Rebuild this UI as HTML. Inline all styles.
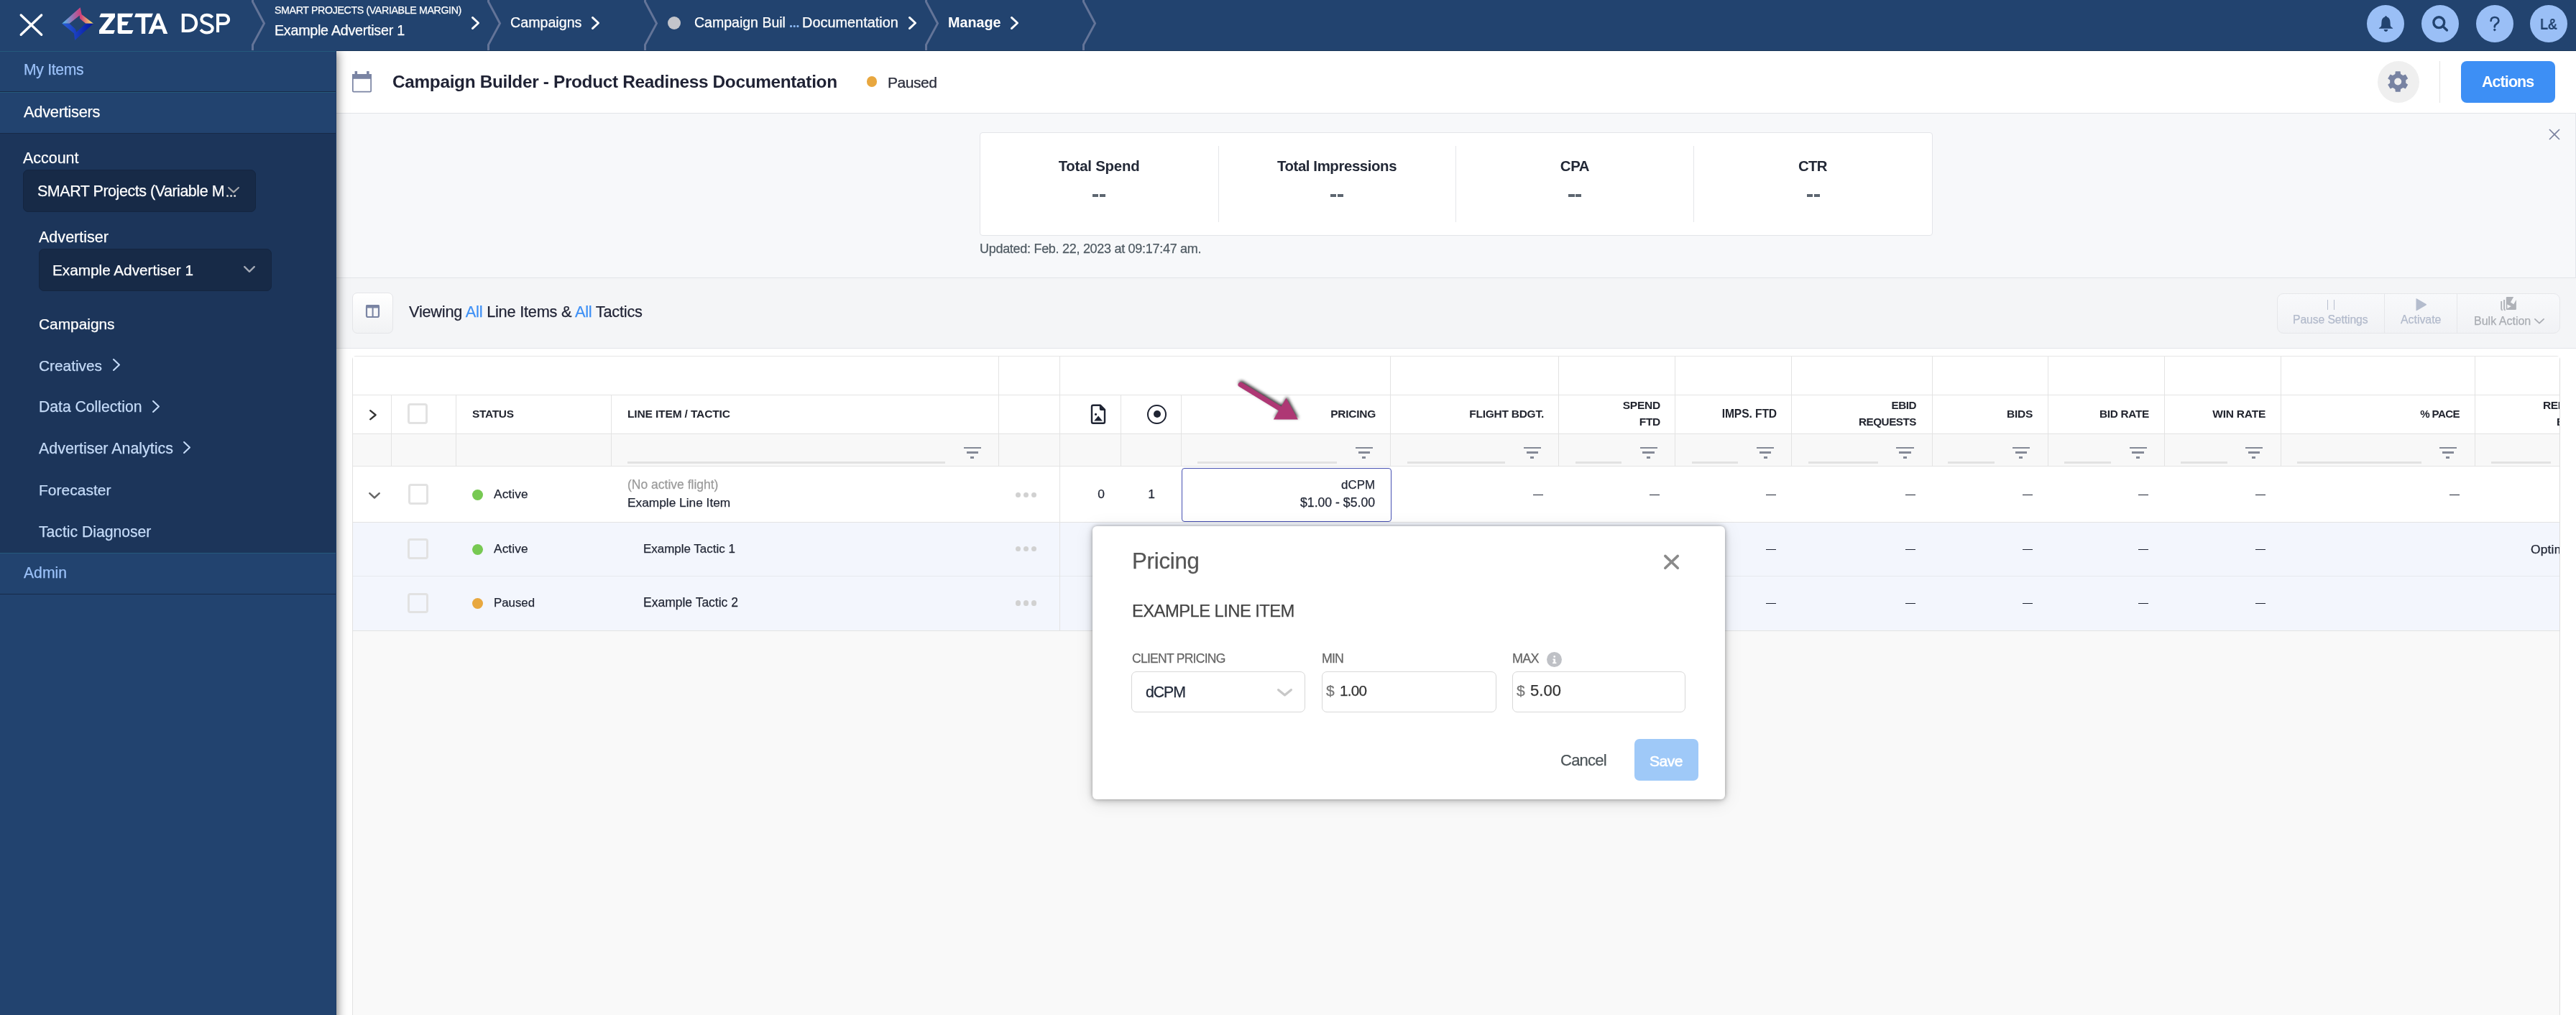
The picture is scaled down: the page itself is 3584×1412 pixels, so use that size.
<!DOCTYPE html>
<html><head><meta charset="utf-8">
<style>
*{box-sizing:border-box;margin:0;padding:0}
html,body{width:3584px;height:1412px;overflow:hidden;background:#fff;font-family:"Liberation Sans",sans-serif;position:relative}
.a{position:absolute}
.t{position:absolute;white-space:nowrap;line-height:1;will-change:transform}
.r{-webkit-text-stroke:0.25px currentColor}
</style></head><body>
<div class="a" style="left:0;top:0;width:3584px;height:71px;background:#22436f"></div>
<div class="a" style="left:468px;top:70px;width:3116px;height:1px;background:#1b3659"></div>
<svg class="a" style="left:0;top:0" width="70" height="70"><g stroke="#fff" stroke-width="3.3" stroke-linecap="round"><line x1="29.2" y1="21" x2="57.7" y2="48.3"/><line x1="57.7" y1="21" x2="29.2" y2="48.3"/></g></svg>
<svg class="a" style="left:80px;top:5px" width="56" height="56" viewBox="80 5 56 56">
<defs>
<linearGradient id="lgT" x1="86" y1="0" x2="130" y2="0" gradientUnits="userSpaceOnUse"><stop offset="0" stop-color="#4fc0f5"/><stop offset="0.35" stop-color="#9a6fb0"/><stop offset="0.6" stop-color="#d0407a"/><stop offset="1" stop-color="#fbf36a"/></linearGradient>
<linearGradient id="lgB" x1="86" y1="0" x2="130" y2="0" gradientUnits="userSpaceOnUse"><stop offset="0" stop-color="#2a5fd8"/><stop offset="1" stop-color="#0514a0"/></linearGradient>
</defs>
<path d="M86.2 32.8 L111.7 10.3 L113.6 20 L130 32.8 Z M96.6 32.8 L110.7 21.4 L111.2 26 L119.3 32.8 Z" fill="url(#lgT)" fill-rule="evenodd"/>
<path d="M86.2 32.8 L130 32.8 L104.1 55.9 L103 46.5 Z M96.6 32.8 L119.3 32.8 L106.2 44.8 L105 40.5 Z" fill="url(#lgB)" fill-rule="evenodd"/>
</svg>
<svg class="a" style="left:130px;top:10px" width="200" height="45" viewBox="130 10 200 45"><g fill="#fff" fill-rule="evenodd">
<path d="M140.5 18.8 H160 V23.7 L146.1 41.9 H159.8 L158 46.9 H138 V41.9 L151.8 24.1 H138.2 Z"/>
<path d="M163.7 18.8 H185.3 L183.1 23.9 H169.7 V29.9 H178.8 L176.6 35.2 H169.7 V41.9 H185.5 L183.3 46.9 H166.3 Q163.7 46.9 163.7 44.3 Z"/>
<path d="M188.9 18.8 H212.9 L210.9 23.9 H202.2 V46.9 H196.8 V23.9 H187.1 Z"/>
<path d="M218.2 18.8 H222 L233.3 46.9 H227.5 L225.2 40.6 H215.3 L212.1 46.9 H206.3 Z M220 26.5 L223.8 35.8 H216.4 Z"/>
</g>
<path d="M252.7 18.9 H261 C270 18.9 275.2 24.6 275.2 32 C275.2 39.4 270 45.1 261 45.1 H252.7 Z M256.9 23 H260.8 C267 23 270.9 26.8 270.9 32 C270.9 37.2 267 41 260.8 41 H256.9 Z" fill="#fff" fill-rule="evenodd"/>
<path d="M295.6 24.4 C293.6 22 290.8 20.9 287.8 20.9 C283.6 20.9 280.3 23.2 280.3 26.8 C280.3 30.6 284 31.7 288 33.1 C292.3 34.6 295.7 36 295.7 39.6 C295.7 43 292.6 45.5 288 45.5 C284.3 45.5 281.3 43.8 279.2 41.2" fill="none" stroke="#fff" stroke-width="4.1"/>
<path d="M301 18.9 H311.2 C316.6 18.9 320.1 22.4 320.1 27 C320.1 31.6 316.6 35 311.2 35 H305.1 V45.1 H301 Z M305.1 23 H311 C314.2 23 316 24.8 316 27 C316 29.2 314.2 31 311 31 H305.1 Z" fill="#fff" fill-rule="evenodd"/>
</svg>
<svg class="a" style="left:0;top:0" width="1600" height="70"><g fill="none" stroke="#637498" stroke-width="3" stroke-linejoin="miter"><polyline points="351.5,-2 351.5,2.5 367.5,32.6 351.5,62.4 351.5,72" /><polyline points="679.5,-2 679.5,2.5 695.5,32.6 679.5,62.4 679.5,72" /><polyline points="897.5,-2 897.5,2.5 913.5,32.6 897.5,62.4 897.5,72" /><polyline points="1288.5,-2 1288.5,2.5 1304.5,32.6 1288.5,62.4 1288.5,72" /><polyline points="1507.5,-2 1507.5,2.5 1523.5,32.6 1507.5,62.4 1507.5,72" /></g></svg>
<svg class="a" style="left:650.7px;top:18px" width="21" height="28"><polyline points="6.4,6.4 14.6,14.0 6.4,21.6" fill="none" stroke="#fff" stroke-width="2.8" stroke-linecap="round" stroke-linejoin="round"/></svg>
<svg class="a" style="left:817.5px;top:18px" width="21" height="28"><polyline points="6.4,6.4 14.6,14.0 6.4,21.6" fill="none" stroke="#fff" stroke-width="2.8" stroke-linecap="round" stroke-linejoin="round"/></svg>
<svg class="a" style="left:1258.8px;top:18px" width="21" height="28"><polyline points="6.4,6.4 14.6,14.0 6.4,21.6" fill="none" stroke="#fff" stroke-width="2.8" stroke-linecap="round" stroke-linejoin="round"/></svg>
<svg class="a" style="left:1401px;top:18px" width="21" height="28"><polyline points="6.4,6.4 14.6,14.0 6.4,21.6" fill="none" stroke="#fff" stroke-width="2.8" stroke-linecap="round" stroke-linejoin="round"/></svg>
<div class="t r" style="top:7.00px;font-size:14.22px;color:#fff;letter-spacing:-0.37px;left:381.80px;">SMART PROJECTS (VARIABLE MARGIN)</div>
<div class="t r" style="top:33.00px;font-size:19.69px;color:#fff;letter-spacing:-0.26px;left:382.40px;">Example Advertiser 1</div>
<div class="t r" style="top:22.00px;font-size:19.67px;color:#fff;left:709.70px;">Campaigns</div>
<div class="a" style="left:929px;top:23px;width:18px;height:18px;border-radius:50%;background:#c3c5cb"></div>
<div class="t r" style="top:22.00px;font-size:19.53px;color:#fff;left:965.60px;">Campaign Buil</div>
<div class="a" style="left:1099.2px;top:35.3px;width:2.7px;height:2.7px;border-radius:50%;background:#8dbaf5;box-shadow:4.7px 0 0 #8dbaf5,9.4px 0 0 #8dbaf5"></div>
<div class="t r" style="top:22.00px;font-size:19.92px;color:#fff;left:1116.00px;">Documentation</div>
<div class="t" style="top:22.00px;font-size:19.74px;color:#fff;font-weight:700;left:1319.00px;">Manage</div>
<div class="a" style="left:3292.8px;top:7px;width:52px;height:52px;border-radius:50%;background:#9abff6"></div>
<div class="a" style="left:3369px;top:7px;width:52px;height:52px;border-radius:50%;background:#9abff6"></div>
<div class="a" style="left:3445px;top:7px;width:52px;height:52px;border-radius:50%;background:#9abff6"></div>
<div class="a" style="left:3520px;top:7px;width:52px;height:52px;border-radius:50%;background:#9abff6"></div>
<svg class="a" style="left:3300px;top:15px" width="40" height="36" viewBox="3300 15 40 36"><g fill="#22436f">
<path d="M3319.5 22.2 c.9 0 1.4 .6 1.4 1.4 c3.2 1 4.5 3.6 4.6 7.2 l.3 4.6 c.2 1.4 1.6 2.7 3.3 3.5 v.9 h-19.2 v-.9 c1.7 -.8 3.1 -2.1 3.3 -3.5 l.3 -4.6 c.1 -3.6 1.4 -6.2 4.6 -7.2 c0 -.8 .5 -1.4 1.4 -1.4z"/>
<path d="M3316.6 41 h5.8 c-.4 1.8 -1.5 3 -2.9 3 s-2.5 -1.2 -2.9 -3z"/></g></svg>
<svg class="a" style="left:3375px;top:15px" width="40" height="36" viewBox="3375 15 40 36"><g fill="none" stroke="#22436f" stroke-width="3.4" stroke-linecap="round">
<circle cx="3393.3" cy="31.2" r="7.4"/><line x1="3398.6" y1="36.6" x2="3404.4" y2="42"/></g></svg>
<svg class="a" style="left:3455px;top:15px" width="32" height="36" viewBox="3455 15 32 36"><path d="M3465.6 29 C3465.6 25.8 3468 24 3470.9 24 C3474 24 3476.4 26 3476.4 28.9 C3476.4 32.2 3472.6 33.2 3471.3 35.2 C3470.9 35.9 3470.8 36.6 3470.8 37.4" fill="none" stroke="#22436f" stroke-width="2.7" stroke-linecap="round"/><path d="M3470.8 39.4 l2.1 2.1 l-2.1 2.1 l-2.1 -2.1z" fill="#22436f"/></svg>
<div class="t" style="left:3533.6px;top:24.10px;font-size:21.5px;font-weight:700;color:#22436f;letter-spacing:-0.6px;transform:scaleX(0.86);transform-origin:0 0">L&amp;</div>
<div class="a" style="left:0;top:71px;width:468px;height:1341px;background:#22436f"></div>
<div class="a" style="left:0;top:71px;width:467px;height:1px;background:#255a7c"></div>
<div class="a" style="left:0;top:127px;width:468px;height:1px;background:#172a48"></div><div class="a" style="left:0;top:128px;width:468px;height:1px;background:#255a7c"></div>
<div class="a" style="left:0;top:185px;width:468px;height:584px;background:#1c355a;border-top:1px solid #172a48"></div>
<div class="a" style="left:0;top:769px;width:468px;height:1px;background:#255a7c"></div>
<div class="a" style="left:0;top:826px;width:468px;height:1px;background:#172a48"></div>
<div class="t r" style="top:86.00px;font-size:21.15px;color:#9bc1f8;letter-spacing:-0.30px;left:32.60px;">My Items</div>
<div class="t r" style="top:145.00px;font-size:21.84px;color:#fff;letter-spacing:-0.27px;left:32.60px;">Advertisers</div>
<div class="t r" style="top:210.00px;font-size:21.45px;color:#fff;left:32.40px;">Account</div>
<div class="a" style="left:32px;top:236px;width:324px;height:59px;border-radius:7px;background:#172a47;border:1px solid #142540"></div>
<div class="t r" style="top:256.00px;font-size:21.48px;color:#fff;letter-spacing:-0.46px;left:51.50px;">SMART Projects (Variable M</div>
<svg class="a" style="left:312px;top:254.89999999999998px" width="26" height="18.4"><polyline points="6.05,6.05 13.0,12.35 19.95,6.05" fill="none" stroke="#a6a8ad" stroke-width="2.1" stroke-linecap="round" stroke-linejoin="round"/></svg>
<div class="a" style="left:314.7px;top:270.5px;width:3px;height:3px;border-radius:50%;background:#d6d6d6;box-shadow:5.1px 0 0 #d6d6d6,10.2px 0 0 #d6d6d6"></div>
<div class="t r" style="top:319.00px;font-size:21.55px;color:#fff;left:54.00px;">Advertiser</div>
<div class="a" style="left:54px;top:346px;width:324px;height:59px;border-radius:7px;background:#172a47;border:1px solid #142540"></div>
<div class="t r" style="top:366.00px;font-size:20.74px;color:#fff;left:73.30px;">Example Advertiser 1</div>
<svg class="a" style="left:334px;top:365px" width="26" height="19"><polyline points="6.2,6.2 13.0,12.8 19.8,6.2" fill="none" stroke="#a3a9b5" stroke-width="2.4" stroke-linecap="round" stroke-linejoin="round"/></svg>
<div class="t r" style="top:441.00px;font-size:20.86px;color:#fff;left:54.40px;">Campaigns</div>
<div class="t r" style="top:499.00px;font-size:20.83px;color:#c5dbf8;left:54.40px;">Creatives</div>
<svg class="a" style="left:151.5px;top:494px" width="20" height="27"><polyline points="6.05,6.05 13.95,13.5 6.05,20.95" fill="none" stroke="#c5dbf8" stroke-width="2.1" stroke-linecap="round" stroke-linejoin="round"/></svg>
<div class="t r" style="top:555.00px;font-size:21.16px;color:#c5dbf8;left:54.40px;">Data Collection</div>
<svg class="a" style="left:206.6px;top:551.5px" width="20" height="27"><polyline points="6.05,6.05 13.95,13.5 6.05,20.95" fill="none" stroke="#c5dbf8" stroke-width="2.1" stroke-linecap="round" stroke-linejoin="round"/></svg>
<div class="t r" style="top:614.00px;font-size:21.43px;color:#c5dbf8;left:54.40px;">Advertiser Analytics</div>
<svg class="a" style="left:250px;top:609px" width="20" height="27"><polyline points="6.05,6.05 13.95,13.5 6.05,20.95" fill="none" stroke="#c5dbf8" stroke-width="2.1" stroke-linecap="round" stroke-linejoin="round"/></svg>
<div class="t r" style="top:671.00px;font-size:21.03px;color:#c5dbf8;left:54.40px;">Forecaster</div>
<div class="t r" style="top:729.00px;font-size:21.17px;color:#c5dbf8;left:54.40px;">Tactic Diagnoser</div>
<div class="t r" style="top:786.00px;font-size:21.17px;color:#9bc1f8;left:32.60px;">Admin</div>
<div class="a" style="left:468px;top:71px;width:3116px;height:1341px;background:#fff"></div>
<div class="a" style="left:468px;top:157px;width:3116px;height:230px;background:#f7f8fa;border-top:1px solid #e2e4e8;border-bottom:1px solid #e2e4e8;border-right:1px solid #e4e6ea"></div>
<div class="a" style="left:468px;top:387px;width:3116px;height:98px;background:#f4f5f7;border-bottom:1px solid #e3e5e9"></div>
<svg class="a" style="left:488px;top:97px" width="32" height="34" viewBox="488 97 32 34">
<rect x="490.85" y="104" width="25.3" height="23.6" rx="1.2" fill="none" stroke="#7a84a3" stroke-width="1.7"/>
<rect x="490" y="103" width="27" height="6.8" fill="#7a84a3"/>
<rect x="493.6" y="99" width="3.5" height="5" fill="#7a84a3"/><rect x="510.1" y="99" width="3.5" height="5" fill="#7a84a3"/></svg>
<div class="t" style="top:102.00px;font-size:24.38px;color:#1f2234;font-weight:700;letter-spacing:-0.33px;left:546.20px;">Campaign Builder - Product Readiness Documentation</div>
<div class="a" style="left:1206px;top:106.4px;width:14.2px;height:14.2px;border-radius:50%;background:#e8a73f"></div>
<div class="t r" style="top:104.00px;font-size:21.07px;color:#2a2d3b;letter-spacing:-0.49px;left:1234.90px;">Paused</div>
<div class="a" style="left:3308px;top:85px;width:58px;height:58px;border-radius:50%;background:#efefef"></div>
<svg class="a" style="left:3316px;top:93px" width="42" height="42" viewBox="3316 93 42 42"><path d="M3332.37,102.98 L3332.79,99.30 L3339.61,99.30 L3340.03,102.98 L3343.40,104.92 L3346.79,103.45 L3350.20,109.35 L3347.23,111.56 L3347.23,115.44 L3350.20,117.65 L3346.79,123.55 L3343.40,122.08 L3340.03,124.02 L3339.61,127.70 L3332.79,127.70 L3332.37,124.02 L3329.00,122.08 L3325.61,123.55 L3322.20,117.65 L3325.17,115.44 L3325.17,111.56 L3322.20,109.35 L3325.61,103.45 L3329.00,104.92 Z M3341.2,113.5 A5 5 0 1 0 3331.2,113.5 A5 5 0 1 0 3341.2,113.5 Z" fill="#7883a2" fill-rule="evenodd"/></svg>
<div class="a" style="left:3394px;top:85px;width:1px;height:58px;background:#e3e3e3"></div>
<div class="a" style="left:3424px;top:85px;width:131px;height:58px;border-radius:8px;background:#3d8ff5"></div>
<div class="t" style="top:104.00px;font-size:21.39px;color:#fff;font-weight:700;letter-spacing:-0.87px;left:3452.80px;">Actions</div>
<div class="a" style="left:1363px;top:184px;width:1326px;height:144px;background:#fff;border:1px solid #e3e5e9;border-radius:4px"></div>
<div class="a" style="left:1694.5px;top:203px;width:1px;height:106px;background:#e5e6e9"></div>
<div class="a" style="left:2025px;top:203px;width:1px;height:106px;background:#e5e6e9"></div>
<div class="a" style="left:2356px;top:203px;width:1px;height:106px;background:#e5e6e9"></div>
<div class="t" style="top:221.00px;font-size:20.40px;color:#232937;font-weight:700;letter-spacing:-0.22px;left:528.79px;width:2000px;text-align:center;">Total Spend</div>
<div class="a" style="left:1519.9px;top:270.3px;width:8.4px;height:3.6px;background:#5d6670"></div><div class="a" style="left:1529.8000000000002px;top:270.3px;width:8.4px;height:3.6px;background:#5d6670"></div>
<div class="t" style="top:221.00px;font-size:20.40px;color:#232937;font-weight:700;letter-spacing:-0.40px;left:859.80px;width:2000px;text-align:center;">Total Impressions</div>
<div class="a" style="left:1851px;top:270.3px;width:8.4px;height:3.6px;background:#5d6670"></div><div class="a" style="left:1860.9px;top:270.3px;width:8.4px;height:3.6px;background:#5d6670"></div>
<div class="t" style="top:221.00px;font-size:20.40px;color:#232937;font-weight:700;letter-spacing:-0.38px;left:1191.01px;width:2000px;text-align:center;">CPA</div>
<div class="a" style="left:2182.2px;top:270.3px;width:8.4px;height:3.6px;background:#5d6670"></div><div class="a" style="left:2192.1px;top:270.3px;width:8.4px;height:3.6px;background:#5d6670"></div>
<div class="t" style="top:221.00px;font-size:20.40px;color:#232937;font-weight:700;letter-spacing:-0.71px;left:1522.34px;width:2000px;text-align:center;">CTR</div>
<div class="a" style="left:2513.7px;top:270.3px;width:8.4px;height:3.6px;background:#5d6670"></div><div class="a" style="left:2523.6px;top:270.3px;width:8.4px;height:3.6px;background:#5d6670"></div>
<div class="t r" style="top:337.00px;font-size:18.01px;color:#4f5a62;letter-spacing:-0.29px;left:1362.80px;">Updated: Feb. 22, 2023 at 09:17:47 am.</div>
<svg class="a" style="left:3543px;top:176px" width="22" height="22" viewBox="3543 176 22 22"><g stroke="#7a829e" stroke-width="1.7"><line x1="3547" y1="180" x2="3561" y2="194"/><line x1="3561" y1="180" x2="3547" y2="194"/></g></svg>
<div class="a" style="left:490px;top:407px;width:57px;height:57px;border-radius:7px;border:1px solid #e4e5e8;background:linear-gradient(#fff,#f1f2f4)"></div>
<svg class="a" style="left:505px;top:420px" width="28" height="26" viewBox="505 420 28 26"><rect x="510" y="425" width="17" height="16" rx="2" fill="none" stroke="#7a84a3" stroke-width="2.2"/>
<rect x="509" y="424" width="19" height="4.5" rx="1.5" fill="#7a84a3"/><rect x="517.6" y="427" width="2" height="14" fill="#7a84a3"/></svg>
<div class="t r" style="top:423.00px;font-size:21.74px;color:#1f2234;letter-spacing:-0.22px;left:569.00px;">Viewing <span style="color:#3d8ff5">All</span> Line Items &amp; <span style="color:#3d8ff5">All</span> Tactics</div>
<div class="a" style="left:3168px;top:407.5px;width:394px;height:56.5px;border-radius:9px;border:1px solid #e6e7ea;background:linear-gradient(#f8f9fb,#f1f2f5)"></div>
<div class="a" style="left:3317px;top:408px;width:1px;height:56px;background:#e6e7ea"></div>
<div class="a" style="left:3418px;top:408px;width:1px;height:56px;background:#e6e7ea"></div>
<div class="a" style="left:3237.8px;top:416.7px;width:1.6px;height:14.5px;background:#b8bfcf"></div><div class="a" style="left:3246.5px;top:416.7px;width:1.6px;height:14.5px;background:#b8bfcf"></div>
<div class="t r" style="top:437.00px;font-size:15.78px;color:#b2bacb;letter-spacing:-0.11px;left:3190.00px;">Pause Settings</div>
<svg class="a" style="left:3358px;top:412px" width="22" height="24" viewBox="3358 412 22 24"><path d="M3361.5 416.5 Q3361 414.6 3362.7 415.6 L3375.6 423 Q3376.6 423.8 3375.6 424.6 L3362.7 432 Q3361 433 3361.5 431.1 Z" fill="#b4bccd"/></svg>
<div class="t r" style="top:437.00px;font-size:15.92px;color:#b2bacb;letter-spacing:-0.03px;left:3340.00px;">Activate</div>
<svg class="a" style="left:3476px;top:410px" width="30" height="26" viewBox="3476 410 30 26"><g fill="none" stroke="#afb2b8" stroke-width="1.9">
<path d="M3480.2 419 v10.5 c0 1.2 .6 1.8 1.6 2.1"/><path d="M3484.1 417 v12.6 c0 1.2 .6 1.8 1.6 2.1"/></g>
<path d="M3486.8 414.2 a1.1 1.1 0 0 1 1.1 -1.1 h9.3 l-4.3 7.5 l4.4 2.6 l3.6 -6.3 v12.9 a1.2 1.2 0 0 1 -1.2 1.2 h-11.7 a1.2 1.2 0 0 1 -1.2 -1.2z" fill="#afb2b8"/>
<path d="M3488.2 423.6 l5.6 2.4 l-5.3 3.2z" fill="#f6f7f9"/></svg>
<div class="t r" style="top:439.00px;font-size:16.01px;color:#a9acb2;letter-spacing:0.01px;left:3441.70px;">Bulk Action</div>
<svg class="a" style="left:3521px;top:438.4px" width="24" height="17.5"><polyline points="5.9,5.9 12.0,11.6 18.1,5.9" fill="none" stroke="#a9acb2" stroke-width="1.8" stroke-linecap="round" stroke-linejoin="round"/></svg>
<div class="a" style="left:490px;top:495px;width:3072px;height:930px;background:#f9f9f9;border-left:1px solid #e2e2e2;border-top:1px solid #e6e6e6;border-right:1px solid #dedede;border-top-right-radius:5px;border-top-left-radius:5px"></div>
<div class="a" style="left:491px;top:496px;width:3070px;height:53px;background:#fff"></div>
<div class="a" style="left:491px;top:550px;width:3070px;height:53px;background:#fff"></div>
<div class="a" style="left:491px;top:604px;width:3070px;height:44px;background:#f8f8f8"></div>
<div class="a" style="left:491px;top:649px;width:3070px;height:77px;background:#fff"></div>
<div class="a" style="left:491px;top:727px;width:3070px;height:74px;background:#f3f6fd"></div>
<div class="a" style="left:491px;top:802px;width:3070px;height:75px;background:#f3f6fd"></div>
<div class="a" style="left:491px;top:549px;width:3070px;height:1px;background:#e3e3e3"></div>
<div class="a" style="left:491px;top:603px;width:3070px;height:1px;background:#e3e3e3"></div>
<div class="a" style="left:491px;top:648px;width:3070px;height:1px;background:#e3e3e3"></div>
<div class="a" style="left:491px;top:726px;width:3070px;height:1px;background:#e3e3e3"></div>
<div class="a" style="left:491px;top:801px;width:3070px;height:1px;background:#e6e9ee"></div>
<div class="a" style="left:491px;top:877px;width:3070px;height:1px;background:#e3e3e3"></div>
<div class="a" style="left:544px;top:550px;width:1px;height:98px;background:#e3e3e3"></div>
<div class="a" style="left:634px;top:550px;width:1px;height:98px;background:#e3e3e3"></div>
<div class="a" style="left:850px;top:550px;width:1px;height:98px;background:#e3e3e3"></div>
<div class="a" style="left:1389px;top:496px;width:1px;height:152px;background:#e3e3e3"></div>
<div class="a" style="left:1474px;top:496px;width:1px;height:152px;background:#e3e3e3"></div>
<div class="a" style="left:1559px;top:550px;width:1px;height:98px;background:#e3e3e3"></div>
<div class="a" style="left:1643px;top:550px;width:1px;height:98px;background:#e3e3e3"></div>
<div class="a" style="left:1934px;top:496px;width:1px;height:152px;background:#e3e3e3"></div>
<div class="a" style="left:2168px;top:496px;width:1px;height:152px;background:#e3e3e3"></div>
<div class="a" style="left:2330px;top:496px;width:1px;height:152px;background:#e3e3e3"></div>
<div class="a" style="left:2492px;top:496px;width:1px;height:152px;background:#e3e3e3"></div>
<div class="a" style="left:2688px;top:496px;width:1px;height:152px;background:#e3e3e3"></div>
<div class="a" style="left:2849px;top:496px;width:1px;height:152px;background:#e3e3e3"></div>
<div class="a" style="left:3011px;top:496px;width:1px;height:152px;background:#e3e3e3"></div>
<div class="a" style="left:3173px;top:496px;width:1px;height:152px;background:#e3e3e3"></div>
<div class="a" style="left:3443px;top:496px;width:1px;height:152px;background:#e3e3e3"></div>
<div class="a" style="left:1474px;top:649px;width:1px;height:228px;background:#e3e3e3"></div>
<svg class="a" style="left:509px;top:565px" width="19.8" height="24.5"><polyline points="6.15,6.15 13.65,12.25 6.15,18.35" fill="none" stroke="#333" stroke-width="2.3" stroke-linecap="round" stroke-linejoin="round"/></svg>
<div class="a" style="left:566.8px;top:561.2px;width:28.5px;height:28.5px;border:3px solid #e2e2e2;border-radius:4px"></div>
<div class="t" style="top:568.00px;font-size:15.45px;color:#22252f;font-weight:700;letter-spacing:-0.30px;left:656.80px;">STATUS</div>
<div class="t" style="top:568.00px;font-size:15.55px;color:#22252f;font-weight:700;letter-spacing:-0.16px;left:872.80px;">LINE ITEM / TACTIC</div>
<svg class="a" style="left:1514px;top:560px" width="28" height="34" viewBox="1514 560 28 34">
<path d="M1521 563.8 h10 l6 6 v17 a2 2 0 0 1 -2 2 h-14 a2 2 0 0 1 -2 -2 v-21 a2 2 0 0 1 2 -2z" fill="none" stroke="#1f2433" stroke-width="2.4" stroke-linejoin="round"/>
<path d="M1529.8 563.8 l7.2 7.2 h-5.2 a2 2 0 0 1 -2 -2z" fill="#1f2433"/>
<circle cx="1524.5" cy="576.4" r="1.6" fill="#1f2433"/><path d="M1522.2 585.6 l5.9 -7.2 l5.8 7.2z" fill="#1f2433"/></svg>
<div class="a" style="left:1596.2px;top:563.1px;width:26.6px;height:26.6px;border-radius:50%;border:2.7px solid #1f2433"></div>
<div class="a" style="left:1604.5px;top:571.4px;width:10px;height:10px;border-radius:50%;background:#1f2433"></div>
<div class="t" style="top:568.00px;font-size:15.48px;color:#22252f;font-weight:700;letter-spacing:-0.25px;left:-86.45px;width:2000px;text-align:right;">PRICING</div>
<div class="t" style="top:568.00px;font-size:15.47px;color:#22252f;font-weight:700;letter-spacing:-0.23px;left:147.57px;width:2000px;text-align:right;">FLIGHT BDGT.</div>
<div class="t" style="top:568.00px;font-size:15.65px;color:#22252f;font-weight:700;letter-spacing:-0.12px;left:472.08px;width:2000px;text-align:right;">IMPS. FTD</div>
<div class="t" style="top:568.00px;font-size:15.52px;color:#22252f;font-weight:700;letter-spacing:-0.26px;left:828.14px;width:2000px;text-align:right;">BIDS</div>
<div class="t" style="top:568.00px;font-size:15.39px;color:#22252f;font-weight:700;letter-spacing:-0.30px;left:989.90px;width:2000px;text-align:right;">BID RATE</div>
<div class="t" style="top:568.00px;font-size:15.52px;color:#22252f;font-weight:700;letter-spacing:-0.23px;left:1152.27px;width:2000px;text-align:right;">WIN RATE</div>
<div class="t" style="top:568.00px;font-size:15.08px;color:#22252f;font-weight:700;letter-spacing:-0.59px;left:1421.71px;width:2000px;text-align:right;">% PACE</div>
<div class="t" style="top:556.00px;font-size:15.56px;color:#22252f;font-weight:700;letter-spacing:-0.25px;left:309.95px;width:2000px;text-align:right;">SPEND</div>
<div class="t" style="top:579.00px;font-size:15.54px;color:#22252f;font-weight:700;letter-spacing:-0.30px;left:309.90px;width:2000px;text-align:right;">FTD</div>
<div class="t" style="top:556.00px;font-size:15.25px;color:#22252f;font-weight:700;letter-spacing:-0.48px;left:665.72px;width:2000px;text-align:right;">EBID</div>
<div class="t" style="top:579.00px;font-size:15.24px;color:#22252f;font-weight:700;letter-spacing:-0.48px;left:665.72px;width:2000px;text-align:right;">REQUESTS</div>
<div class="a" style="left:3444px;top:550px;width:117px;height:53px;overflow:hidden">
<div class="t" style="top:6.00px;font-size:15.50px;color:#22252f;font-weight:700;letter-spacing:-0.40px;left:93.70px;">REMAINING</div>
<div class="t" style="top:29.00px;font-size:15.50px;color:#22252f;font-weight:700;letter-spacing:-0.40px;left:113.00px;">BUDGET</div>
</div>
<div class="a" style="left:872.8px;top:642px;width:442.20000000000005px;height:3px;background:#e2e2e2"></div>
<div class="a" style="left:1340.7px;top:621.9px;width:24.2px;height:2.4px;background:#858a97"></div><div class="a" style="left:1344.6000000000001px;top:628.4px;width:16.3px;height:2.4px;background:#858a97"></div><div class="a" style="left:1350.1000000000001px;top:635.2px;width:5px;height:2.4px;background:#858a97"></div>
<div class="a" style="left:1666px;top:642px;width:193.70000000000005px;height:3px;background:#e2e2e2"></div>
<div class="a" style="left:1885.8px;top:621.9px;width:24.2px;height:2.4px;background:#858a97"></div><div class="a" style="left:1889.7px;top:628.4px;width:16.3px;height:2.4px;background:#858a97"></div><div class="a" style="left:1895.2px;top:635.2px;width:5px;height:2.4px;background:#858a97"></div>
<div class="a" style="left:1957.7px;top:642px;width:135.99999999999977px;height:3px;background:#e2e2e2"></div>
<div class="a" style="left:2120px;top:621.9px;width:24.2px;height:2.4px;background:#858a97"></div><div class="a" style="left:2123.9px;top:628.4px;width:16.3px;height:2.4px;background:#858a97"></div><div class="a" style="left:2129.4px;top:635.2px;width:5px;height:2.4px;background:#858a97"></div>
<div class="a" style="left:2192.4px;top:642px;width:63.59999999999991px;height:3px;background:#e2e2e2"></div>
<div class="a" style="left:2281.5px;top:621.9px;width:24.2px;height:2.4px;background:#858a97"></div><div class="a" style="left:2285.4px;top:628.4px;width:16.3px;height:2.4px;background:#858a97"></div><div class="a" style="left:2290.9px;top:635.2px;width:5px;height:2.4px;background:#858a97"></div>
<div class="a" style="left:2354px;top:642px;width:63.69999999999982px;height:3px;background:#e2e2e2"></div>
<div class="a" style="left:2444.2px;top:621.9px;width:24.2px;height:2.4px;background:#858a97"></div><div class="a" style="left:2448.1px;top:628.4px;width:16.3px;height:2.4px;background:#858a97"></div><div class="a" style="left:2453.6px;top:635.2px;width:5px;height:2.4px;background:#858a97"></div>
<div class="a" style="left:2515.8px;top:642px;width:97.09999999999991px;height:3px;background:#e2e2e2"></div>
<div class="a" style="left:2638.4px;top:621.9px;width:24.2px;height:2.4px;background:#858a97"></div><div class="a" style="left:2642.3px;top:628.4px;width:16.3px;height:2.4px;background:#858a97"></div><div class="a" style="left:2647.8px;top:635.2px;width:5px;height:2.4px;background:#858a97"></div>
<div class="a" style="left:2710px;top:642px;width:65.30000000000018px;height:3px;background:#e2e2e2"></div>
<div class="a" style="left:2800px;top:621.9px;width:24.2px;height:2.4px;background:#858a97"></div><div class="a" style="left:2803.9px;top:628.4px;width:16.3px;height:2.4px;background:#858a97"></div><div class="a" style="left:2809.4px;top:635.2px;width:5px;height:2.4px;background:#858a97"></div>
<div class="a" style="left:2872.4px;top:642px;width:64.59999999999991px;height:3px;background:#e2e2e2"></div>
<div class="a" style="left:2962.5px;top:621.9px;width:24.2px;height:2.4px;background:#858a97"></div><div class="a" style="left:2966.4px;top:628.4px;width:16.3px;height:2.4px;background:#858a97"></div><div class="a" style="left:2971.9px;top:635.2px;width:5px;height:2.4px;background:#858a97"></div>
<div class="a" style="left:3033.8px;top:642px;width:65.39999999999964px;height:3px;background:#e2e2e2"></div>
<div class="a" style="left:3124px;top:621.9px;width:24.2px;height:2.4px;background:#858a97"></div><div class="a" style="left:3127.9px;top:628.4px;width:16.3px;height:2.4px;background:#858a97"></div><div class="a" style="left:3133.4px;top:635.2px;width:5px;height:2.4px;background:#858a97"></div>
<div class="a" style="left:3196px;top:642px;width:173px;height:3px;background:#e2e2e2"></div>
<div class="a" style="left:3393.7px;top:621.9px;width:24.2px;height:2.4px;background:#858a97"></div><div class="a" style="left:3397.6px;top:628.4px;width:16.3px;height:2.4px;background:#858a97"></div><div class="a" style="left:3403.1px;top:635.2px;width:5px;height:2.4px;background:#858a97"></div>
<div class="a" style="left:3466px;top:642px;width:83px;height:3px;background:#e2e2e2"></div>
<svg class="a" style="left:508px;top:680px" width="26" height="18.7"><polyline points="6.2,6.2 13.0,12.5 19.8,6.2" fill="none" stroke="#666" stroke-width="2.4" stroke-linecap="round" stroke-linejoin="round"/></svg>
<div class="a" style="left:567.5px;top:673.3px;width:28.5px;height:28.5px;border:3px solid #e2e2e2;border-radius:4px"></div>
<div class="a" style="left:657.0px;top:680.8px;width:15px;height:15px;border-radius:50%;background:#77c952"></div>
<div class="t r" style="top:679.00px;font-size:17.24px;color:#1f2433;letter-spacing:0.13px;left:686.60px;">Active</div>
<div class="t r" style="top:666.00px;font-size:17.51px;color:#9a9a9a;left:873.30px;">(No active flight)</div>
<div class="t r" style="top:691.00px;font-size:17.31px;color:#1f2433;left:873.30px;">Example Line Item</div>
<div class="a" style="left:1413.0px;top:684.9px;width:7.2px;height:7.2px;border-radius:50%;background:#d1d1d1"></div><div class="a" style="left:1423.8px;top:684.9px;width:7.2px;height:7.2px;border-radius:50%;background:#d1d1d1"></div><div class="a" style="left:1434.6px;top:684.9px;width:7.2px;height:7.2px;border-radius:50%;background:#d1d1d1"></div>
<div class="t r" style="top:679.00px;font-size:17.40px;color:#1f2433;left:531.50px;width:2000px;text-align:center;">0</div>
<div class="t r" style="top:679.00px;font-size:17.40px;color:#1f2433;left:601.80px;width:2000px;text-align:center;">1</div>
<div class="a" style="left:1644px;top:651px;width:291.5px;height:75px;border:1.5px solid #4650b2;border-radius:4px;background:#fff"></div>
<div class="t r" style="top:667.00px;font-size:16.92px;color:#1f2433;left:-87.50px;width:2000px;text-align:right;">dCPM</div>
<div class="t r" style="top:691.00px;font-size:17.65px;color:#1f2433;left:-87.50px;width:2000px;text-align:right;">$1.00 - $5.00</div>
<div class="a" style="left:2132.8px;top:688px;width:14px;height:1.4px;background:#1f2433"></div>
<div class="a" style="left:2295.2px;top:688px;width:14px;height:1.4px;background:#1f2433"></div>
<div class="a" style="left:2457px;top:688px;width:14px;height:1.4px;background:#1f2433"></div>
<div class="a" style="left:2651.4px;top:688px;width:14px;height:1.4px;background:#1f2433"></div>
<div class="a" style="left:2813.5px;top:688px;width:14px;height:1.4px;background:#1f2433"></div>
<div class="a" style="left:2975.2px;top:688px;width:14px;height:1.4px;background:#1f2433"></div>
<div class="a" style="left:3137.7px;top:688px;width:14px;height:1.4px;background:#1f2433"></div>
<div class="a" style="left:3407.9px;top:688px;width:14px;height:1.4px;background:#1f2433"></div>
<div class="a" style="left:567.4px;top:749px;width:28.5px;height:28.5px;border:3px solid #e2e2e2;border-radius:4px"></div>
<div class="a" style="left:657.0px;top:756.6px;width:15px;height:15px;border-radius:50%;background:#77c952"></div>
<div class="t r" style="top:755.00px;font-size:17.24px;color:#1f2433;letter-spacing:0.13px;left:686.60px;">Active</div>
<div class="t r" style="top:756.00px;font-size:16.97px;color:#1f2433;left:894.80px;">Example Tactic 1</div>
<div class="a" style="left:1413.0px;top:759.9px;width:7.2px;height:7.2px;border-radius:50%;background:#d1d1d1"></div><div class="a" style="left:1423.8px;top:759.9px;width:7.2px;height:7.2px;border-radius:50%;background:#d1d1d1"></div><div class="a" style="left:1434.6px;top:759.9px;width:7.2px;height:7.2px;border-radius:50%;background:#d1d1d1"></div>
<div class="a" style="left:567.4px;top:824.5px;width:28.5px;height:28.5px;border:3px solid #e2e2e2;border-radius:4px"></div>
<div class="a" style="left:657.0px;top:831.7px;width:15px;height:15px;border-radius:50%;background:#e8a83f"></div>
<div class="t r" style="top:831.00px;font-size:16.81px;color:#1f2433;left:686.60px;">Paused</div>
<div class="t r" style="top:830.00px;font-size:17.51px;color:#1f2433;left:894.80px;">Example Tactic 2</div>
<div class="a" style="left:1413.0px;top:835.4px;width:7.2px;height:7.2px;border-radius:50%;background:#d1d1d1"></div><div class="a" style="left:1423.8px;top:835.4px;width:7.2px;height:7.2px;border-radius:50%;background:#d1d1d1"></div><div class="a" style="left:1434.6px;top:835.4px;width:7.2px;height:7.2px;border-radius:50%;background:#d1d1d1"></div>
<div class="a" style="left:2457px;top:764px;width:14px;height:1.4px;background:#1f2433"></div>
<div class="a" style="left:2457px;top:839px;width:14px;height:1.4px;background:#1f2433"></div>
<div class="a" style="left:2651.4px;top:764px;width:14px;height:1.4px;background:#1f2433"></div>
<div class="a" style="left:2651.4px;top:839px;width:14px;height:1.4px;background:#1f2433"></div>
<div class="a" style="left:2813.5px;top:764px;width:14px;height:1.4px;background:#1f2433"></div>
<div class="a" style="left:2813.5px;top:839px;width:14px;height:1.4px;background:#1f2433"></div>
<div class="a" style="left:2975.2px;top:764px;width:14px;height:1.4px;background:#1f2433"></div>
<div class="a" style="left:2975.2px;top:839px;width:14px;height:1.4px;background:#1f2433"></div>
<div class="a" style="left:3137.7px;top:764px;width:14px;height:1.4px;background:#1f2433"></div>
<div class="a" style="left:3137.7px;top:839px;width:14px;height:1.4px;background:#1f2433"></div>
<div class="a" style="left:3444px;top:727px;width:117px;height:74px;overflow:hidden">
<div class="t r" style="top:29.00px;font-size:17.40px;color:#1f2433;letter-spacing:0.19px;left:77.00px;">Optimize</div>
</div>
<svg class="a" style="left:1700px;top:510px;filter:drop-shadow(1px -2px 2px rgba(0,0,0,.8))" width="130" height="90" viewBox="1700 510 130 90">
<line x1="1726.1" y1="535.1" x2="1790" y2="574" stroke="#ae3774" stroke-width="7" stroke-linecap="round"/>
<path d="M1771.9 583.4 L1789.5 553.8 L1805.9 583.4 Z" fill="#ae3774"/></svg>
<div class="a" style="left:468px;top:71px;width:40px;height:1341px;overflow:hidden"><div class="a" style="left:-200px;top:0;width:200px;height:1600px;box-shadow:0 0 14px rgba(0,0,0,.62)"></div></div>
<div class="a" style="left:467px;top:71px;width:1px;height:1341px;background:#1c3a66"></div>
<div class="a" style="left:1520px;top:732px;width:880px;height:380px;background:#fff;border-radius:6px;box-shadow:0 0 5px rgba(0,0,0,.26),0 2px 12px rgba(0,0,0,.2),0 4px 26px rgba(0,0,0,.1)"></div>
<div class="t r" style="top:765.00px;font-size:31.20px;color:#555;letter-spacing:-0.23px;left:1574.80px;">Pricing</div>
<svg class="a" style="left:2310px;top:767px" width="32" height="30" viewBox="2310 767 32 30"><g stroke="#8a8a8a" stroke-width="3.6" stroke-linecap="round"><line x1="2316.8" y1="773.4" x2="2334.3" y2="790.2"/><line x1="2334.3" y1="773.4" x2="2316.8" y2="790.2"/></g></svg>
<div class="t r" style="top:838.00px;font-size:23.80px;color:#444;letter-spacing:-0.56px;left:1575.30px;">EXAMPLE LINE ITEM</div>
<div class="t r" style="top:908.00px;font-size:17.55px;color:#666;letter-spacing:-0.74px;left:1574.70px;">CLIENT PRICING</div>
<div class="t r" style="top:908.00px;font-size:17.83px;color:#666;letter-spacing:-0.84px;left:1839.30px;">MIN</div>
<div class="t r" style="top:907.00px;font-size:18.03px;color:#666;letter-spacing:-0.78px;left:2104.10px;">MAX</div>
<div class="a" style="left:2152.3px;top:906.9px;width:21px;height:21px;border-radius:50%;background:#bfc1c6"></div>
<svg class="a" style="left:2155px;top:908px" width="16" height="18" viewBox="2155 908 16 18"><g fill="#fff"><circle cx="2162.7" cy="913.4" r="1.35"/><rect x="2161.4" y="916.6" width="2.6" height="5.6"/><rect x="2160.1" y="921.4" width="5.3" height="1.7"/><rect x="2160.4" y="916.6" width="1.5" height="1.3"/></g></svg>
<div class="a" style="left:1574.2px;top:934px;width:242.0px;height:56.6px;border:1px solid #d8d8d8;border-radius:7px;background:#fff"></div>
<div class="a" style="left:1839.3px;top:934px;width:242.29999999999995px;height:56.6px;border:1px solid #d8d8d8;border-radius:7px;background:#fff"></div>
<div class="a" style="left:2103.8px;top:934px;width:241.5px;height:56.6px;border:1px solid #d8d8d8;border-radius:7px;background:#fff"></div>
<div class="t r" style="top:953.00px;font-size:21.27px;color:#222a3a;letter-spacing:-1.03px;left:1593.70px;">dCPM</div>
<svg class="a" style="left:1771.6px;top:953px" width="31" height="20.6"><polyline points="6.65,6.65 15.5,13.95 24.35,6.65" fill="none" stroke="#c8c8c8" stroke-width="3.3" stroke-linecap="round" stroke-linejoin="round"/></svg>
<div class="t r" style="top:950.00px;font-size:21.00px;color:#777;left:1845.30px;">$</div>
<div class="t r" style="top:951.00px;font-size:20.66px;color:#333;letter-spacing:-0.74px;left:1863.50px;">1.00</div>
<div class="t r" style="top:950.00px;font-size:21.00px;color:#777;left:2109.80px;">$</div>
<div class="t r" style="top:950.00px;font-size:21.95px;color:#333;letter-spacing:0.09px;left:2129.20px;">5.00</div>
<div class="t r" style="top:1047.00px;font-size:22.02px;color:#4c5458;letter-spacing:-0.77px;left:2171.20px;">Cancel</div>
<div class="a" style="left:2274px;top:1028px;width:89px;height:57.5px;border-radius:7px;background:#9fc9f8"></div>
<div class="t r" style="top:1048.00px;font-size:21.00px;color:#fff;-webkit-text-stroke:0.6px #fff;letter-spacing:-0.46px;left:2294.80px;">Save</div>
</body></html>
